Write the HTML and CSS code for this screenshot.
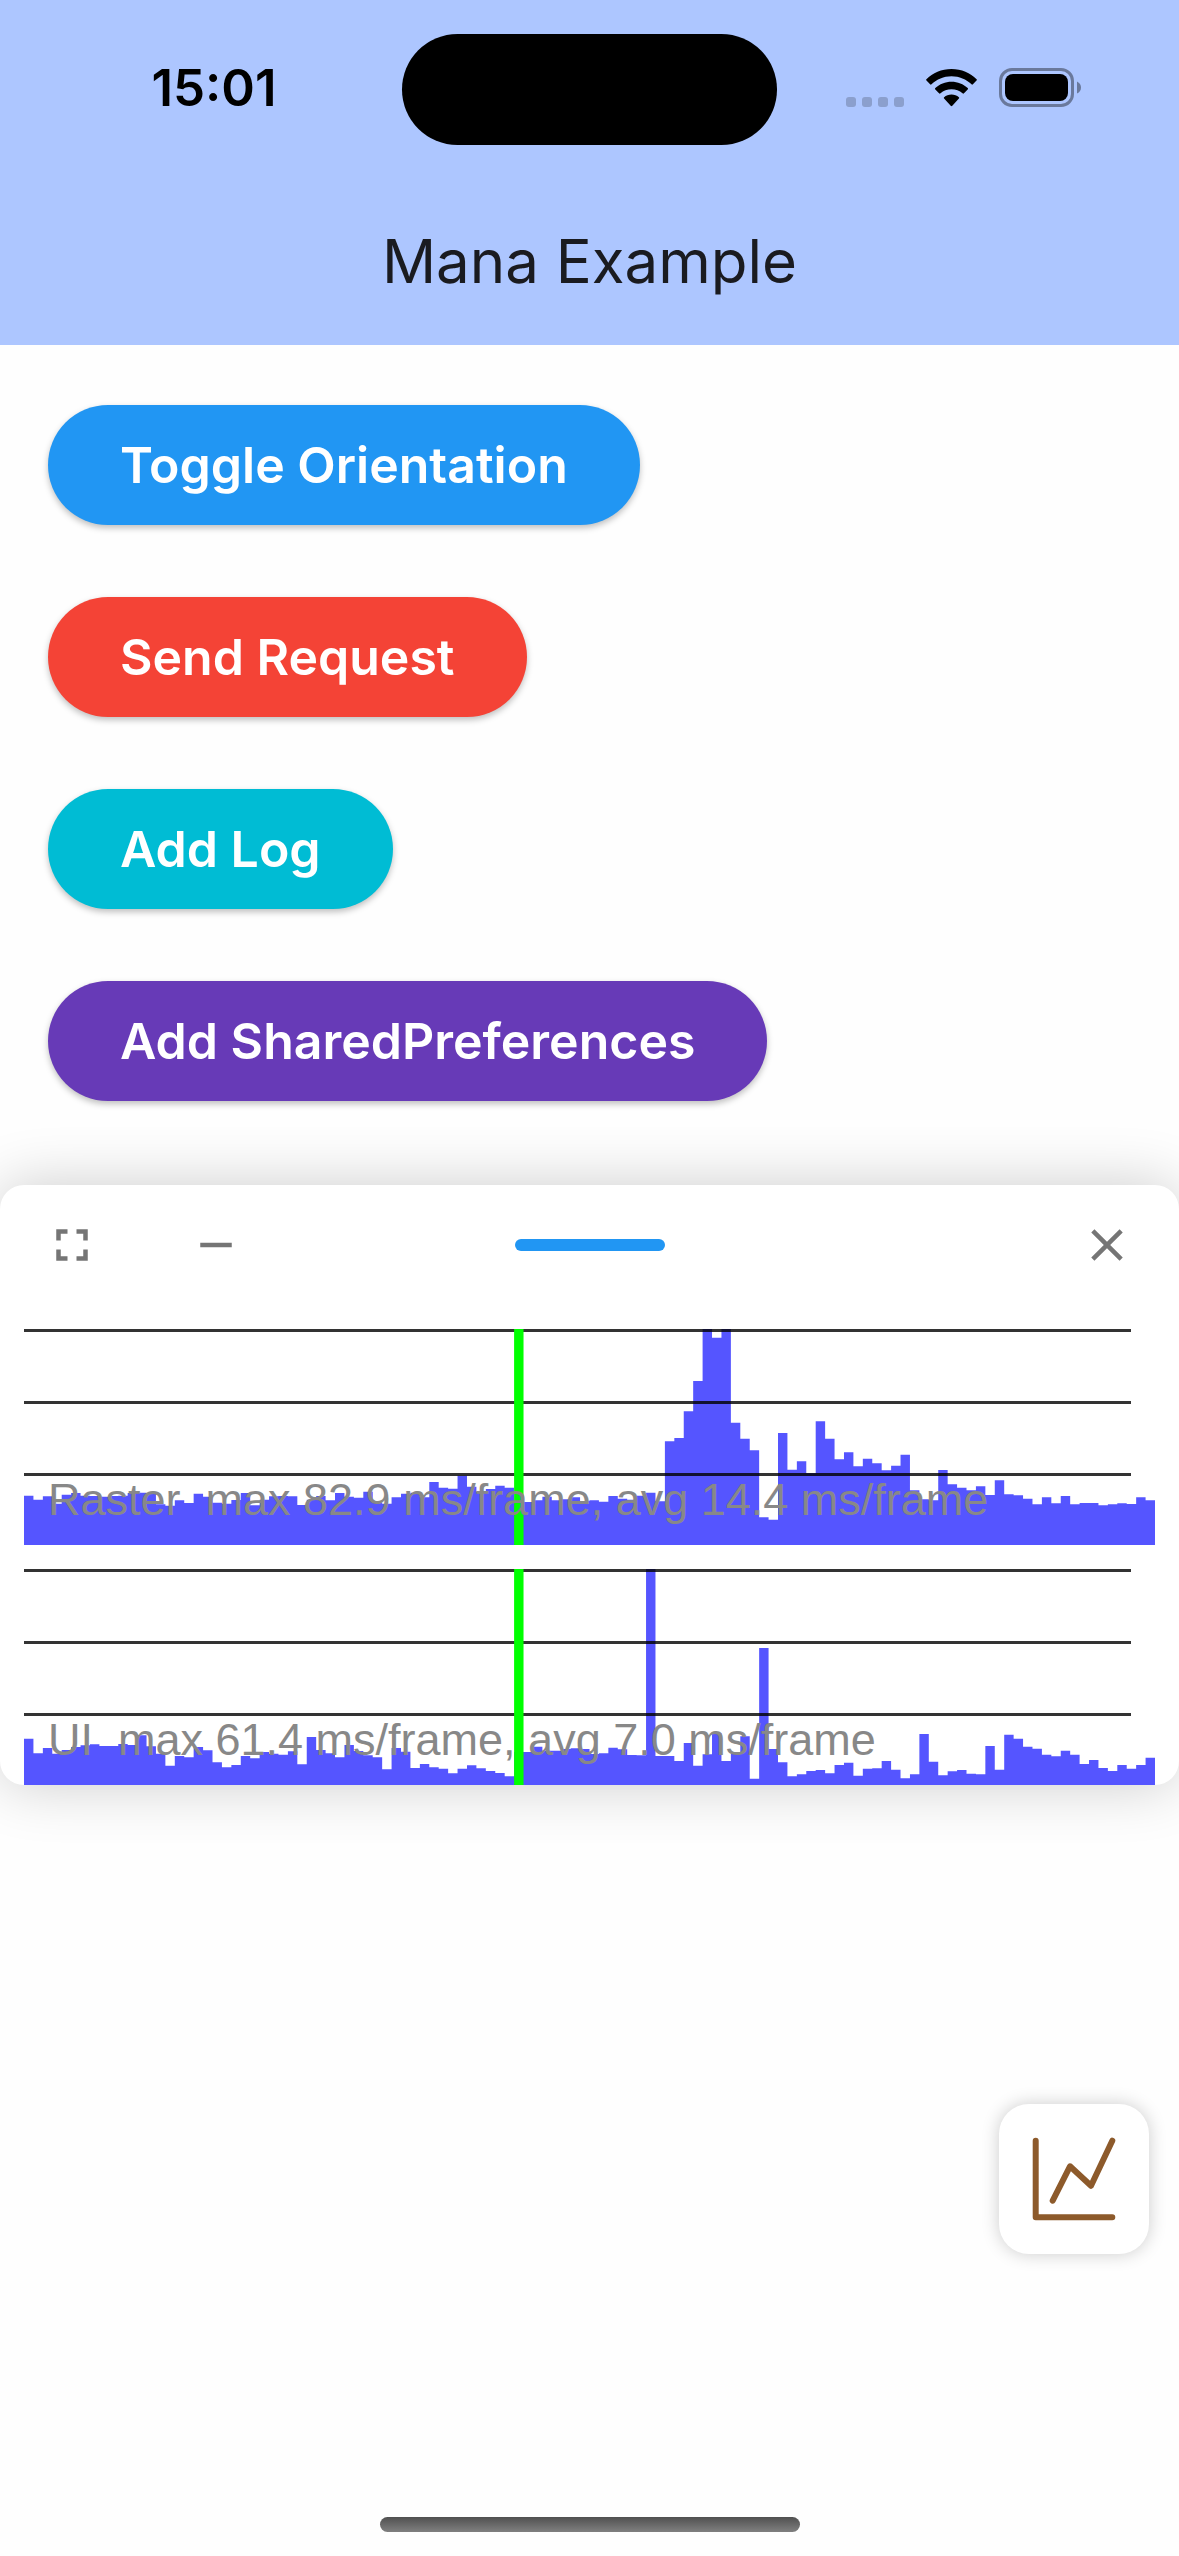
FILE: index.html
```html
<!DOCTYPE html>
<html lang="en">
<head>
<meta charset="utf-8">
<meta name="viewport" content="width=device-width, initial-scale=1">
<title>Mana Example</title>
<link rel="stylesheet" href="styles.css">
</head>
<body>
<div class="screen">
  <header class="app-bar">
    <div class="status-bar">
      <time class="clock">15:01</time>
      <div class="island"></div>
      <div class="indicators">
        <svg class="cellular" viewBox="0 0 58 10" aria-hidden="true">
          <rect x="0" width="10" height="10" rx="3"/>
          <rect x="16" width="10" height="10" rx="3"/>
          <rect x="32" width="10" height="10" rx="3"/>
          <rect x="48" width="10" height="10" rx="3"/>
        </svg>
        <svg class="wifi" viewBox="0 0 51 38" aria-hidden="true">
          <path d="M25.500 0C35.500 0 44.300 3.900 50.600 10.200Q51.200 10.900 50.500 11.600L46.900 15.300Q46.200 16 45.500 15.300C40.300 10.300 33.300 7.300 25.500 7.300S10.700 10.300 5.500 15.300Q4.800 16 4.100 15.300L.5 11.600Q-.2 10.900 .4 10.200C6.700 3.900 15.500 0 25.500 0Z"/>
          <path d="M25.500 12.700C31.700 12.700 37.400 15.100 41.700 19.100Q42.400 19.800 41.700 20.500L38 24.300Q37.300 25 36.500 24.300C33.600 21.700 29.700 20.200 25.500 20.200S17.400 21.700 14.500 24.300Q13.700 25 13 24.300L9.300 20.500Q8.600 19.800 9.300 19.100C13.600 15.100 19.300 12.700 25.500 12.700Z"/>
          <path d="M25.500 25.500C28.300 25.500 30.900 26.500 32.900 28.200Q33.600 28.900 32.900 29.600L26.300 36.800Q25.500 37.600 24.700 36.800L18.100 29.600Q17.400 28.900 18.100 28.200C20.100 26.500 22.700 25.500 25.500 25.500Z"/>
        </svg>
        <svg class="battery" viewBox="0 0 82 39" aria-hidden="true">
          <rect class="battery-case" x="1.500" y="1.500" width="72" height="36" rx="11.500"/>
          <rect x="6" y="6" width="63" height="27" rx="8"/>
          <path class="battery-cap" d="M78 13.500Q82 15.500 82 19.500T78 25.500Z"/>
        </svg>
      </div>
    </div>
    <h1 class="title">Mana Example</h1>
  </header>

  <main class="actions">
    <button type="button" class="pill pill-blue">Toggle Orientation</button>
    <button type="button" class="pill pill-red">Send Request</button>
    <button type="button" class="pill pill-cyan">Add Log</button>
    <button type="button" class="pill pill-purple">Add SharedPreferences</button>
  </main>

  <section class="panel" aria-label="Performance">
    <div class="panel-bar">
      <div class="panel-tools">
        <button type="button" class="icon-button" aria-label="Full screen">
          <svg viewBox="0 0 24 24"><path d="M7 14H5v5h5v-2H7v-3zm-2-4h2V7h3V5H5v5zm12 7h-3v2h5v-5h-2v3zM14 5v2h3v3h2V5h-5z"/></svg>
        </button>
        <button type="button" class="icon-button" aria-label="Minimize">
          <svg viewBox="0 0 24 24"><path d="M19 13H5v-2h14v2z"/></svg>
        </button>
      </div>
      <div class="handle"></div>
      <button type="button" class="icon-button icon-close" aria-label="Close">
        <svg viewBox="0 0 24 24"><path d="M19 6.410 17.590 5 12 10.590 6.410 5 5 6.410 10.590 12 5 17.590 6.410 19 12 13.410 17.590 19 19 17.590 13.410 12z"/></svg>
      </button>
    </div>

    <div class="charts">
      <figure class="chart">
        <svg class="plot" viewBox="0 57 120 648" preserveAspectRatio="none" aria-hidden="true">
          <path class="bars" d="M0 705V557h1V569h1V559h1V581h1V554h1V549h1V557h1V558h1V560h1V558h1V557h1V549h1V548h1V549h1V583h1V587h1V571h1V579h1V551h1V560h1V578h1V581h1V570h1V549h1V586h1V569h1V559h1V558h1V559h1V585h1V569h1V558h1V571h1V549h1V560h1V563h1V545h1V578h1V581h1V562h1V551h1V548h1V562h1V516h1V533h1V536h1V497h1V530h1V545h1V537h1V527h1V533h1V576h1V576h1V571h1V560h1V571h1V568h1V562h1V573h1V571h1V575h1V558h1V566h1V569h1V557h1V548h1V574h1V394h1V384h1V304h1V213h1V57h1V83h1V57h1V338h1V386h1V421h1V622h1V629h1V369h1V479h1V454h1V490h1V334h1V386h1V448h1V427h1V469h1V446h1V460h1V481h1V467h1V434h1V541h1V568h1V571h1V480h1V523h1V533h1V541h1V529h1V555h1V511h1V553h1V556h1V566h1V583h1V562h1V580h1V558h1V583h1V579h1V579h1V586h1V583h1V580h1V582h1V562h1V571h1V705Z"/>
        </svg>
        <div class="gridlines"><i></i><i></i><i></i></div>
        <svg class="plot" viewBox="0 57 120 648" preserveAspectRatio="none" aria-hidden="true">
          <rect class="cursor" x="52" y="57" width="1" height="648"/>
        </svg>
        <figcaption class="caption">Raster  max 82.9 ms/frame, avg 14.4 ms/frame</figcaption>
      </figure>

      <figure class="chart">
        <svg class="plot" viewBox="0 57 120 648" preserveAspectRatio="none" aria-hidden="true">
          <path class="bars" d="M0 705V566h1V610h1V594h1V611h1V600h1V591h1V586h1V583h1V588h1V588h1V582h1V585h1V556h1V589h1V611h1V647h1V618h1V622h1V591h1V601h1V637h1V652h1V645h1V618h1V625h1V606h1V611h1V614h1V604h1V643h1V561h1V600h1V610h1V622h1V585h1V603h1V616h1V622h1V658h1V594h1V605h1V654h1V642h1V652h1V656h1V670h1V656h1V646h1V655h1V663h1V669h1V679h1V606h1V606h1V590h1V602h1V602h1V597h1V595h1V597h1V612h1V610h1V593h1V598h1V615h1V616h1V57h1V618h1V618h1V633h1V579h1V647h1V613h1V549h1V633h1V611h1V559h1V686h1V294h1V597h1V637h1V679h1V673h1V663h1V660h1V670h1V645h1V638h1V677h1V656h1V655h1V633h1V659h1V685h1V673h1V552h1V635h1V676h1V664h1V660h1V671h1V673h1V588h1V659h1V554h1V566h1V590h1V596h1V614h1V619h1V602h1V614h1V642h1V630h1V654h1V663h1V645h1V656h1V645h1V623h1V705Z"/>
        </svg>
        <div class="gridlines"><i></i><i></i><i></i></div>
        <svg class="plot" viewBox="0 57 120 648" preserveAspectRatio="none" aria-hidden="true">
          <rect class="cursor" x="52" y="57" width="1" height="648"/>
        </svg>
        <figcaption class="caption">UI  max 61.4 ms/frame, avg 7.0 ms/frame</figcaption>
      </figure>
    </div>
  </section>

  <button type="button" class="fab" aria-label="Performance monitor">
    <svg viewBox="30 30 90 90"><path d="M36.700 36.700V113.300H113.300M53.700 96.700 71 62.300 92 81.700 113.300 36.700"/></svg>
  </button>
  <div class="home-indicator"></div>
</div>
</body>
</html>
```
FILE: styles.css
```css
* { box-sizing: border-box; }

body {
  margin: 0;
  background: #fefefe;
  font-family: Inter, "Liberation Sans", sans-serif;
}

button {
  margin: 0;
  border: 0;
  font: inherit;
  cursor: pointer;
}

svg { display: block; }

.screen {
  position: relative;
  min-height: 100vh;
  overflow: hidden;
}

/* App bar */
.app-bar { background: #adc6ff; }

.status-bar {
  display: grid;
  grid-template-columns: 1fr 375px 1fr;
  align-items: center;
  padding: 34px 0 33px;
}

.clock {
  padding: 0 0 4px 26px;
  text-align: center;
  font-size: 51px;
  line-height: 60px;
  font-weight: 600;
  color: #000;
}

.island {
  height: 111px;
  border-radius: 56px;
  background: #000;
}

.indicators {
  display: flex;
  justify-content: flex-end;
  align-items: flex-end;
  gap: 22px;
  padding: 0 98px 4px 0;
}

.cellular { width: 58px; height: 10px; fill: #8b9fcd; }
.wifi { width: 51px; height: 38px; }
.battery { width: 82px; height: 39px; }
.battery-case { fill: none; stroke: #6a799c; stroke-width: 3; }
.battery-cap { fill: #6a799c; }

.title {
  margin: 0;
  text-align: center;
  font-size: 60px;
  line-height: 167px;
  font-weight: 400;
  color: #1a1b20;
}

/* Action buttons */
.actions {
  display: flex;
  flex-direction: column;
  align-items: flex-start;
  gap: 72px;
  padding: 60px 48px 84px;
}

.pill {
  padding: 30px 72px;
  border-radius: 60px;
  font-size: 50px;
  line-height: 60px;
  font-weight: 600;
  color: #fff;
  box-shadow: 0 3px 6px rgba(0, 0, 0, .25);
}

.pill-blue { background: #2196f3; }
.pill-red { background: #f44336; }
.pill-cyan { background: #00bcd4; }
.pill-purple { background: #673ab7; }

/* Performance panel */
.panel {
  border-radius: 24px;
  background: #fff;
  box-shadow: 0 0 60px rgba(0, 0, 0, .2);
}

.panel-bar {
  display: grid;
  grid-template-columns: 1fr 150px 1fr;
  align-items: center;
  height: 120px;
}

.panel-tools { display: flex; }

.icon-button {
  display: flex;
  justify-content: center;
  align-items: center;
  width: 144px;
  height: 120px;
  padding: 0;
  background: none;
}

.icon-button svg { width: 54px; height: 54px; fill: #757575; }
.icon-close { justify-self: end; }

.handle {
  height: 12px;
  border-radius: 6px;
  background: #2196f3;
}

.charts {
  display: grid;
  gap: 24px;
  padding: 24px 24px 0;
}

/* Bars, grid lines, cursor and caption share one grid cell */
.chart {
  display: grid;
  grid-template-columns: 1fr;
  height: 216px;
  margin: 0;
}

.chart > * { grid-area: 1 / 1; }
.plot { width: 100%; height: 216px; }
.bars { fill: #5555ff; }
.cursor { fill: #00ff00; }

.gridlines {
  display: grid;
  grid-template-rows: repeat(3, 1fr);
  margin-right: 24px;
}

.gridlines i { border-top: 3px solid rgba(0, 0, 0, .8); }

.caption {
  align-self: end;
  padding: 0 24px;
  margin-bottom: 25px;
  font-family: "Liberation Sans", Arial, sans-serif;
  font-size: 45px;
  line-height: 40px;
  color: #888;
  white-space: pre;
}

/* Floating controls */
.fab {
  position: absolute;
  right: 30px;
  bottom: 302px;
  display: flex;
  justify-content: center;
  align-items: center;
  width: 150px;
  height: 150px;
  padding: 0;
  border-radius: 30px;
  background: #fff;
  box-shadow: 0 0 18px rgba(0, 0, 0, .2);
}

.fab svg {
  width: 90px;
  height: 90px;
  fill: none;
  stroke: #8d5a2b;
  stroke-width: 6;
  stroke-linecap: round;
  stroke-linejoin: round;
}

.home-indicator {
  position: absolute;
  left: 50%;
  bottom: 24px;
  width: 420px;
  height: 15px;
  margin-left: -210px;
  border-radius: 8px;
  background: linear-gradient(#505050, #808080);
}
```
